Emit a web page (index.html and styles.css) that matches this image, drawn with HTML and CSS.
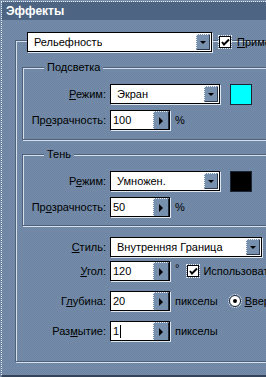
FILE: index.html
```html
<!DOCTYPE html>
<html lang="ru">
<head>
<meta charset="utf-8">
<title>Эффекты</title>
<link rel="stylesheet" href="styles.css">
</head>
<body>
<div class="window">
  <div class="titlebar">Эффекты</div>
  <div class="group outer">
    <div class="outer-head">
      <div class="combo combo-main"><span class="combo-text">Рельефность</span><span class="drop"><span class="tri-down"></span></span></div>
      <span class="check"><svg width="9" height="9" viewBox="0 0 9 9"><path d="M1 4 L3 6.5 L8 1.5" fill="none" stroke="#000" stroke-width="2"/></svg></span>
      <span class="text"><u>П</u>рименить</span>
    </div>

    <div class="group inner first">
      <div class="legend">Подсветка</div>
      <div class="form">
        <span class="lab"><u>Р</u>ежим:</span>
        <div class="ctrls">
          <div class="combo combo-mode"><span class="combo-text">Экран</span><span class="drop"><span class="tri-down"></span></span></div>
          <span class="swatch cyan"></span>
        </div>
        <span class="lab">Пр<u>о</u>зрачность:</span>
        <div class="ctrls">
          <div class="spin"><span class="spin-val">100</span><span class="spin-btn"><span class="tri-right"></span></span></div>
          <span class="unit">%</span>
        </div>
      </div>
    </div>

    <div class="group inner second">
      <div class="legend">Тень</div>
      <div class="form">
        <span class="lab">Р<u>е</u>жим:</span>
        <div class="ctrls">
          <div class="combo combo-mode"><span class="combo-text">Умножен.</span><span class="drop"><span class="tri-down"></span></span></div>
          <span class="swatch black"></span>
        </div>
        <span class="lab">Пр<u>о</u>зрачность:</span>
        <div class="ctrls">
          <div class="spin"><span class="spin-val">50</span><span class="spin-btn"><span class="tri-right"></span></span></div>
          <span class="unit">%</span>
        </div>
      </div>
    </div>

    <div class="outer-rows">
      <div class="row row-style">
        <span class="lab"><u>С</u>тиль:</span>
        <div class="ctrls">
          <div class="combo combo-style"><span class="combo-text">Внутренняя Граница</span><span class="drop"><span class="tri-down"></span></span></div>
        </div>
      </div>
      <div class="row row-angle">
        <span class="lab"><u>У</u>гол:</span>
        <div class="ctrls">
          <div class="spin"><span class="spin-val">120</span><span class="spin-btn"><span class="tri-right"></span></span></div>
          <span class="unit deg">°</span>
          <span class="check"><svg width="9" height="9" viewBox="0 0 9 9"><path d="M1 4 L3 6.5 L8 1.5" fill="none" stroke="#000" stroke-width="2"/></svg></span>
          <span class="text">Использовать общий угол</span>
        </div>
      </div>
      <div class="row">
        <span class="lab">Г<u>л</u>убина:</span>
        <div class="ctrls">
          <div class="spin"><span class="spin-val">20</span><span class="spin-btn"><span class="tri-right"></span></span></div>
          <span class="unit">пикселы</span>
          <span class="radio"><span class="dot"></span></span>
          <span class="text"><u>В</u>верх</span>
        </div>
      </div>
      <div class="row">
        <span class="lab">Раз<u>м</u>ытие:</span>
        <div class="ctrls">
          <div class="spin"><span class="spin-val">1<span class="caret"></span></span><span class="spin-btn"><span class="tri-right"></span></span></div>
          <span class="unit">пикселы</span>
        </div>
      </div>
    </div>
  </div>
</div>
</body>
</html>
```

FILE: styles.css
```css
html, body {
  margin: 0;
  padding: 0;
  width: 266px;
  height: 377px;
  overflow: hidden;
  background: #7189a7;
}

body {
  font-family: "Liberation Sans", Arial, sans-serif;
  font-size: 11px;
  color: #000;
}

u {
  text-decoration: underline;
  text-underline-offset: 1px;
}

.window {
  margin: 1px 0 0 1px;
  height: 373px;
  width: 300px;
  border-top: 1px dotted #e6edf5;
  border-left: 1px dotted #e6edf5;
  border-bottom: 2px solid #34445a;
  background-color: #7189a7;
  background-image: repeating-conic-gradient(#748ca9 0 25%, #6d85a2 0 50%);
  background-size: 2px 2px;
  overflow: hidden;
}

.titlebar {
  height: 18px;
  line-height: 18px;
  background: #4d6583;
  color: #fff;
  font-weight: bold;
  font-size: 12px;
  padding-left: 4px;
  white-space: nowrap;
}

.group {
  border: 1px solid #4f627b;
  box-shadow: inset 1px 1px 0 rgba(232, 239, 247, 0.85), 1px 1px 0 rgba(232, 239, 247, 0.85);
}

.outer {
  margin: 20px 0 0 13px;
  width: 300px;
  height: 322px;
  box-sizing: border-box;
}

.outer-head {
  margin: -9px 0 0 11px;
  display: flex;
  align-items: center;
  height: 20px;
  white-space: nowrap;
}

.combo {
  box-sizing: border-box;
  height: 20px;
  background: #fff;
  border: 1px solid #000;
  box-shadow: 1px 1px 0 #dfe7f0;
  display: flex;
  align-items: stretch;
  justify-content: space-between;
}

.combo-text {
  padding-left: 6px;
  line-height: 18px;
  white-space: nowrap;
  overflow: hidden;
}

.combo-main { width: 185px; }
.combo-mode { width: 110px; }
.combo-style { width: 152px; }

.drop {
  width: 12px;
  margin: 1px 1px 1px 0;
  background: #7690ae;
  border-top: 1px dotted #eef3f8;
  border-left: 1px dotted #eef3f8;
  border-right: 1px solid #2c3a4c;
  border-bottom: 1px solid #2c3a4c;
  display: flex;
  align-items: center;
  justify-content: center;
}

.tri-down {
  width: 0;
  height: 0;
  border-left: 3px solid transparent;
  border-right: 3px solid transparent;
  border-top: 3px solid #000;
}

.tri-right {
  width: 0;
  height: 0;
  border-top: 4px solid transparent;
  border-bottom: 4px solid transparent;
  border-left: 4px solid #000;
}

.check {
  box-sizing: border-box;
  width: 12px;
  height: 12px;
  background: #fff;
  border: 1px solid #000;
  outline: 1px dotted #e8eef5;
  display: flex;
  align-items: center;
  justify-content: center;
  flex: none;
}

.outer-head .check { margin-left: 7px; }
.outer-head .text { margin-left: 6px; }

.text { white-space: nowrap; }

.inner {
  margin-left: 6px;
  width: 280px;
  box-sizing: border-box;
}

.inner.first { margin-top: 15px; padding-bottom: 9px; }
.inner.second { margin-top: 14px; padding-bottom: 8px; }

.legend {
  margin: -7px 0 0 21px;
  padding: 0 3px;
  height: 13px;
  line-height: 13px;
  width: max-content;
  background-color: #7189a7;
  background-image: repeating-conic-gradient(#748ca9 0 25%, #6d85a2 0 50%);
  background-size: 2px 2px;
}

.form {
  display: grid;
  grid-template-columns: 83px auto;
  column-gap: 4px;
  row-gap: 6px;
  align-items: center;
  margin-top: 10px;
}

.lab {
  text-align: right;
  white-space: nowrap;
}

.ctrls {
  display: flex;
  align-items: center;
  height: 20px;
  white-space: nowrap;
}

.swatch {
  width: 22px;
  height: 21px;
  margin-left: 10px;
  box-sizing: border-box;
  border: 1px solid #1a2636;
}

.swatch.cyan { background: #00ffff; }
.swatch.black { background: #000; }

.spin {
  box-sizing: border-box;
  width: 60px;
  height: 20px;
  display: flex;
  background: #fff;
  border: 1px solid #000;
  box-shadow: 1px 1px 0 #dfe7f0;
}

.spin-val {
  flex: 1;
  padding-left: 2px;
  line-height: 18px;
  display: flex;
  align-items: center;
}

.caret {
  display: inline-block;
  width: 1px;
  height: 13px;
  background: #000;
  margin-left: 1px;
}

.spin-btn {
  width: 14px;
  background: #7690ae;
  border-left: 1px dotted #eef3f8;
  border-top: 1px dotted #eef3f8;
  border-right: 1px solid #1e2a3a;
  display: flex;
  align-items: center;
  justify-content: center;
}

.unit { margin-left: 5px; }
.unit.deg { margin-left: 5px; align-self: flex-start; line-height: 14px; }

.outer-rows {
  margin-top: 11px;
  display: flex;
  flex-direction: column;
  gap: 10px;
}

.row {
  display: grid;
  grid-template-columns: 90px auto;
  column-gap: 4px;
  align-items: center;
}

.row-style { margin-bottom: -6px; }

.row .ctrls .check { margin-left: 8px; }
.row .ctrls .check + .text { margin-left: 4px; }

.radio {
  box-sizing: border-box;
  width: 12px;
  height: 12px;
  margin-left: 11px;
  border-radius: 50%;
  background: #fff;
  border: 1px solid #1a2636;
  outline: 1px dotted #e8eef5;
  outline-offset: 0;
  display: flex;
  align-items: center;
  justify-content: center;
}

.radio .dot {
  width: 4px;
  height: 4px;
  border-radius: 50%;
  background: #000;
}

.radio + .text { margin-left: 4px; }
```
